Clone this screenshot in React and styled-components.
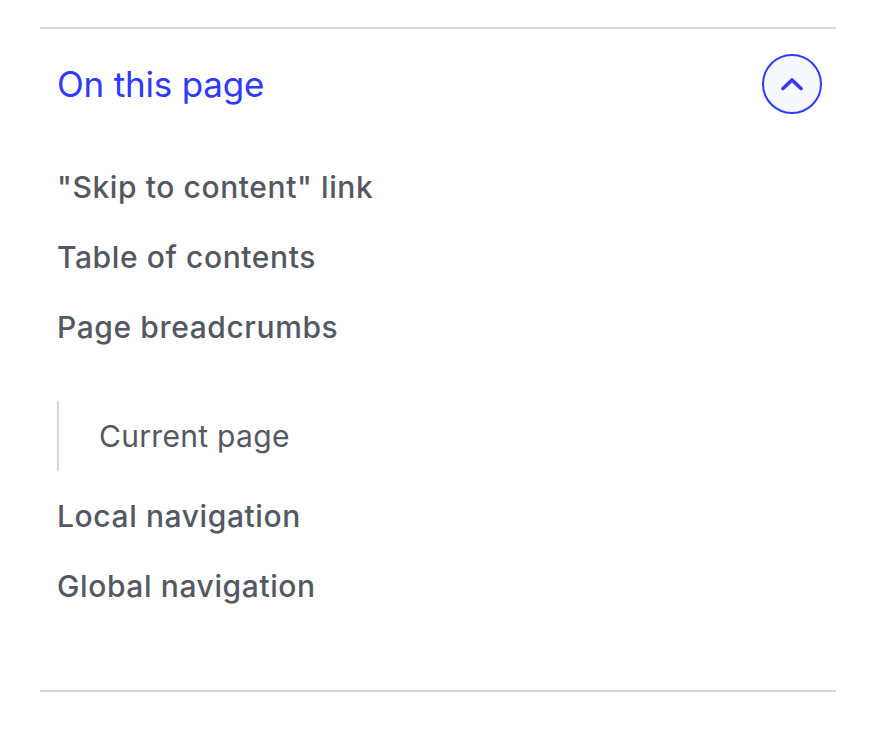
import React from "react";
import styled, { createGlobalStyle } from "styled-components";

const Global = createGlobalStyle`
  html, body { margin: 0; padding: 0; background: #fff; }
  body { font-family: Inter, "Noto Sans", sans-serif; }
`;

const Panel = styled.nav`
  margin: 27px 56px 0 40px;
  border-top: 2px solid #d6d6da;
  border-bottom: 2px solid #d6d6da;
  padding: 0 14px 0 17px;
`;

const Header = styled.div`
  display: flex;
  align-items: center;
  justify-content: space-between;
  padding-top: 25px;
  height: 60px;
`;

const Title = styled.h2`
  margin: 0;
  font-size: 35px;
  font-weight: 400;
  color: #3039ff;
  letter-spacing: -0.2px;
`;

const Toggle = styled.button`
  width: 60px;
  height: 60px;
  border-radius: 50%;
  border: 2px solid #3039ff;
  background: #f6f7ff;
  display: flex;
  align-items: center;
  justify-content: center;
  padding: 0;
  cursor: pointer;
`;

const List = styled.ul`
  list-style: none;
  margin: 38px 0 0;
  padding: 0 0 69px;
`;

const Item = styled.li`
  font-size: 30px;
  font-weight: 500;
  letter-spacing: 0.6px;
  color: #535862;
  & > span {
    height: 70px;
    display: flex;
    align-items: center;
  }
`;

const SubList = styled.ul`
  list-style: none;
  margin: 39px 0 10px;
  padding: 0;
`;

const SubItem = styled.li`
  height: 70px;
  display: flex;
  align-items: center;
  border-left: 2px solid #d6d6da;
  padding-left: 40px;
  font-size: 30px;
  font-weight: 400;
  letter-spacing: 0.3px;
  color: #535862;
`;

export default function App() {
  return (
    <>
      <Global />
      <Panel>
        <Header>
          <Title>On this page</Title>
          <Toggle aria-label="Collapse">
            <svg width="24" height="14" viewBox="0 0 24 14" fill="none">
              <path d="M3 11.5 L12 3 L21 11.5" stroke="#3039ff" strokeWidth="3.6" strokeLinecap="round" strokeLinejoin="round" />
            </svg>
          </Toggle>
        </Header>
        <List>
          <Item><span>"Skip to content" link</span></Item>
          <Item><span>Table of contents</span></Item>
          <Item>
            <span>Page breadcrumbs</span>
            <SubList>
              <SubItem>Current page</SubItem>
            </SubList>
          </Item>
          <Item><span>Local navigation</span></Item>
          <Item><span>Global navigation</span></Item>
        </List>
      </Panel>
    </>
  );
}
